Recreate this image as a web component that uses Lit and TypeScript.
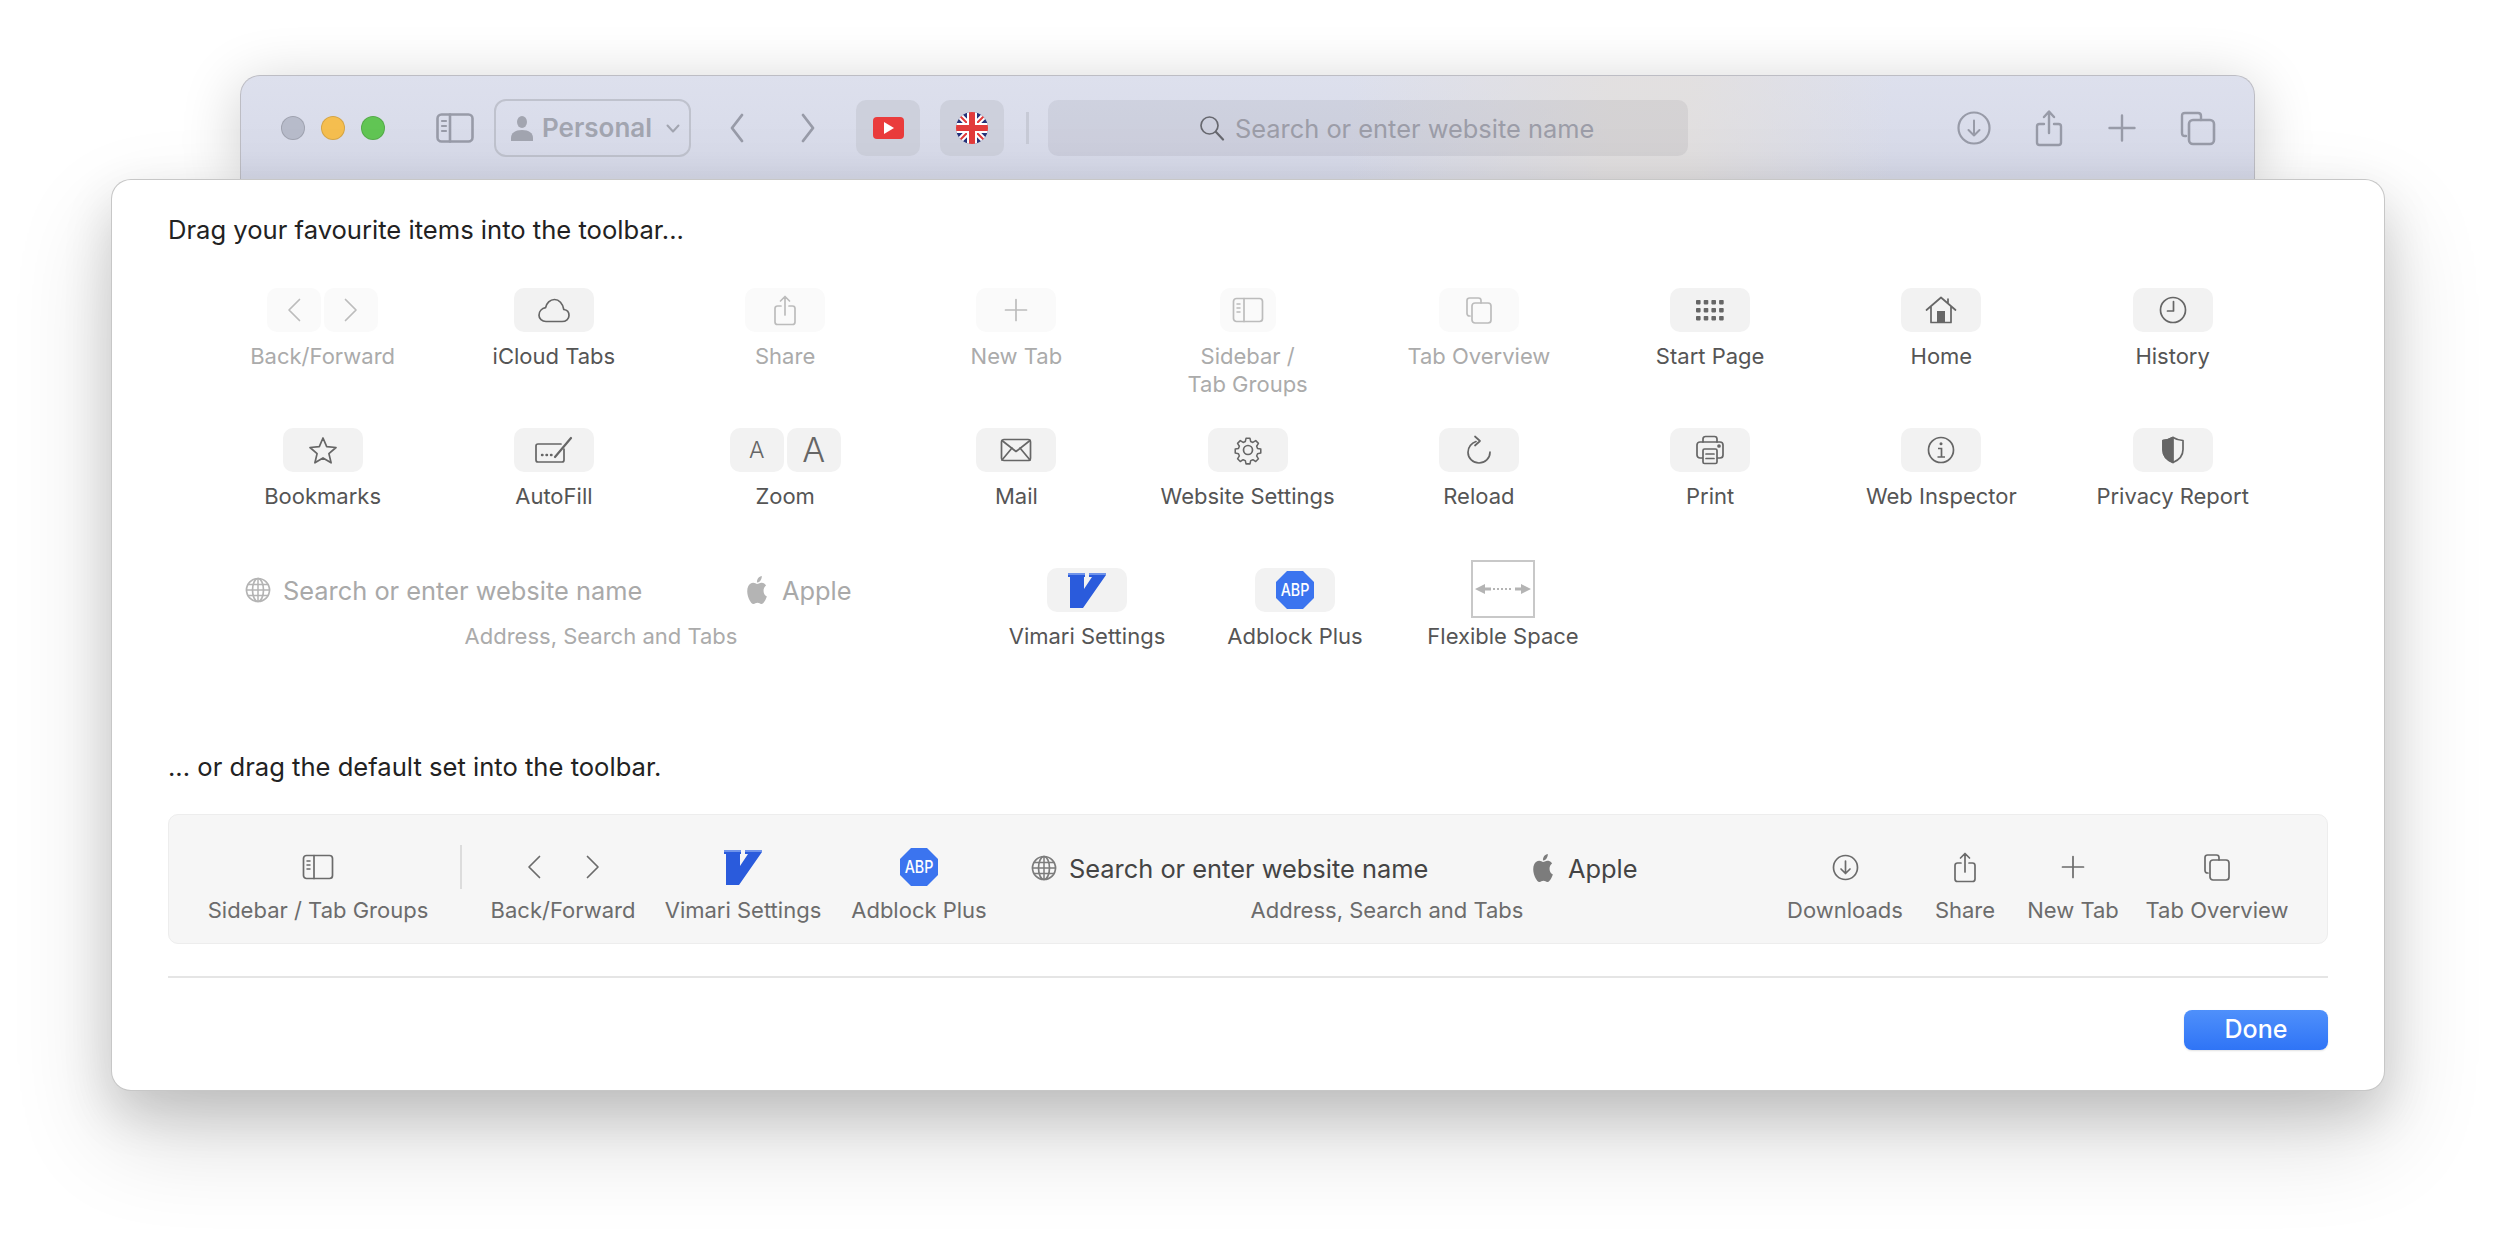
import { LitElement, html, svg, css, TemplateResult, SVGTemplateResult } from "lit";
import { customElement } from "lit/decorators.js";

// ------ icon helpers ------ //
const ico = (w: number, h: number, body: SVGTemplateResult) => html`
  <svg class="ico" width=${w} height=${h} viewBox="0 0 ${w} ${h}" fill="none" stroke="currentColor" stroke-width="1.7"
    stroke-linecap="round" stroke-linejoin="round">${body}</svg>`;

const back = () => ico(14, 24, svg`<path d="M12.5 1.5 2 12l10.5 10.5" />`);
const forward = () => ico(14, 24, svg`<path d="M1.5 1.5 12 12 1.5 22.5" />`);
const cloud = () => ico(34, 25, svg`<path d="M9 23.5h16c4 0 7-2.6 7-6 0-3.400-2.300-5.700-5.200-6C25.800 5.500 22 1.500 17.500 1.500c-4.500 0-8 3.600-8.900 8.200C4.800 10.300 2 13.400 2 17.200c0 3.700 3 6.300 7 6.300Z" />`);
const share = () => ico(24, 31, svg`<path d="M12 20V2M7.5 6 12 1.5 16.5 6M8 11H4.500C3 11 2 12 2 13.5v13.500C2 28.500 3 29.500 4.500 29.500h15c1.500 0 2.500-1 2.500-2.500V13.500C22 12 21 11 19.500 11H16" />`);
const plus = () => ico(24, 24, svg`<path d="M12 1.5v21M1.5 12h21" />`);
const sidebar = () => ico(32, 26, svg`
  <rect x="1.5" y="1.5" width="29" height="23" rx="3" /><path d="M12 1.5v23" />
  <path d="M5 7h3M5 11h3M5 15h3" stroke-width="1.5" />`);
const tabs = () => ico(28, 28, svg`
  <path d="M5 20H4.500C3 20 2 19 2 17.500V4.500C2 3 3 2 4.500 2h9C15 2 16 3 16 4.500V7" />
  <rect x="7" y="7" width="19" height="20" rx="3" />`);
const startPage = () => html`
  <svg class="ico" width="28" height="21" viewBox="0 0 28 21" fill="currentColor">
    ${[0, 1, 2].map((r) =>
      [0, 1, 2, 3].map((c) => svg`<rect x=${c * 7.7} y=${r * 8} width="4.6" height="4.4" rx="0.8" />`))}
  </svg>`;
const home = () => ico(32, 28, svg`
  <path d="M1.5 14 16 1.5 30.5 14M6 10v16.500h20V10M23 7V3" />
  <rect x="12" y="15" width="8" height="11.500" fill="currentColor" stroke="none" />`);
const clock = () => ico(28, 28, svg`<circle cx="14" cy="14" r="12.5" /><path d="M14.5 5.500V15H8.500" />`);
const star = () => ico(30, 29, svg`<path d="m15 2 3.700 8.700 9.300.8-7.100 6.100 2.200 9.200L15 21.900l-8.100 4.900 2.200-9.200L2 11.500l9.300-.8Z" />`);
const autofill = () => ico(40, 28, svg`
  <path d="M27 8H4C2.800 8 2 8.800 2 10v14c0 1.200.8 2 2 2h24c1.200 0 2-.8 2-2V13" />
  <path d="M21 21 37 2" stroke-width="2.2" />
  <path d="M8 19h.5M12.500 19h.5M17 19h.5" stroke-width="2.4" />`);
const mail = () => ico(32, 24, svg`
  <rect x="1.5" y="1.5" width="29" height="21" rx="2.5" />
  <path d="m2 2.500 14 11 14-11M2 22l10-12M30 22 20 10" />`);
const gear = () => ico(30, 30, svg`
  <path d="M12.800 2h4.400l.8 3.600 2.400 1 3.200-2 3 3-2 3.200 1 2.400 3.600.8v4.400l-3.600.8-1 2.400 2 3.200-3 3-3.200-2-2.400 1-.8 3.600h-4.400l-.8-3.600-2.400-1-3.200 2-3-3 2-3.200-1-2.400-3.600-.8v-4.400l3.600-.8 1-2.400-2-3.200 3-3 3.200 2 2.400-1Z" transform="translate(1.5 1.5) scale(.9)" />
  <circle cx="15" cy="15" r="4.5" />`);
const reload = () => ico(26, 30, svg`
  <path d="M10 6.500C5.500 8 2 12.200 2 17.200 2 23.400 7 28 13 28s11-4.600 11-10.800" />
  <path d="M9 1.500 14 6 9 10.500" />`);
const print = () => ico(30, 30, svg`
  <path d="M8 7V4c0-1.500 1-2.500 2.500-2.500h9C21 1.500 22 2.500 22 4v3" />
  <rect x="2" y="7" width="26" height="16" rx="3" />
  <rect x="8" y="14" width="14" height="14.500" rx="1.5" fill="var(--tile, #f2f2f2)" />
  <path d="M11 19h8M11 23.500h8" />
  <circle cx="24" cy="11" r="1" fill="currentColor" />`);
const info = () => html`
  <svg class="ico" width="28" height="28" viewBox="0 0 28 28" fill="none" stroke="currentColor" stroke-width="1.7">
    <circle cx="14" cy="14" r="12.5" /><path d="M11 12.500h3.500V21M10.500 21h7.500" />
    <circle cx="14" cy="7.8" r="1.5" fill="currentColor" stroke="none" />
  </svg>`;
const shield = () => ico(24, 28, svg`
  <path d="M12 1.500c3 1.800 6.500 2.800 10 3v9c0 6-4 10.500-10 13-6-2.500-10-7-10-13v-9c3.500-.2 7-1.200 10-3Z" />
  <path d="M12 1.500v25c-6-2.500-10-7-10-13v-9c3.500-.2 7-1.200 10-3Z" fill="currentColor" />`);
const download = () => ico(27, 27, svg`<circle cx="13.500" cy="13.500" r="12" /><path d="M13.500 7v12.500M9 15l4.500 4.500L18 15" />`);
const search = () => ico(26, 26, svg`<circle cx="10.5" cy="10.5" r="8.5" /><path d="m17 17 7 7.500" stroke-width="2.2" />`);
const globe = () => ico(26, 26, svg`
  <circle cx="13" cy="13" r="11.5" /><ellipse cx="13" cy="13" rx="5.5" ry="11.5" />
  <path d="M13 1.500v23M3 7.500h20M1.500 13h23M3 18.500h20" stroke-width="1.5" />`);
const apple = () => html`
  <svg class="ico" width="24" height="28" viewBox="0 0 24 24" preserveAspectRatio="none" fill="currentColor">
    <path d="M12.152 6.896c-.948 0-2.415-1.078-3.96-1.04-2.04.027-3.91 1.183-4.961 3.014-2.117 3.675-.546 9.103 1.519 12.09 1.013 1.454 2.208 3.09 3.792 3.039 1.52-.065 2.09-.987 3.935-.987 1.831 0 2.35.987 3.96.948 1.637-.026 2.676-1.48 3.676-2.948 1.156-1.688 1.636-3.325 1.662-3.415-.039-.013-3.182-1.221-3.22-4.857-.026-3.04 2.48-4.494 2.597-4.559-1.429-2.09-3.623-2.324-4.39-2.376-2-.156-3.675 1.09-4.61 1.09zM15.53 3.83c.843-1.012 1.4-2.427 1.245-3.83-1.207.052-2.662.805-3.532 1.818-.78.896-1.454 2.338-1.273 3.714 1.338.104 2.715-.688 3.559-1.701" />
  </svg>`;
const vimari = () => html`
  <svg class="ico" width="38" height="35" viewBox="0 0 38 35">
    <path d="M0 0h17v4h-1v12L24 4h-3V0h17v2L15 35H2V4H0Z" fill="#2a5bdc" />
    <path d="M0 0h17v2H0ZM21 0h17v2H21Z" fill="#6f93ea" />
  </svg>`;
const abp = () => html`
  <svg class="ico" width="38" height="38" viewBox="0 0 38 38">
    <path d="M11 0h16l11 11v16L27 38H11L0 27V11Z" fill="#3b74ef" />
    <text x="19" y="25" text-anchor="middle" class="abp" transform="translate(19 0) scale(.84 1) translate(-19 0)">ABP</text>
  </svg>`;
const person = () => html`
  <svg class="ico" width="22" height="25" viewBox="0 0 22 25" fill="currentColor">
    <ellipse cx="11" cy="6" rx="5" ry="6" /><path d="M0 25v-3c0-5 4-8 11-8s11 3 11 8v3Z" />
  </svg>`;
const ukFlag = () => html`
  <svg class="ico" width="32" height="32" viewBox="0 0 32 32">
    <defs><clipPath id="round"><circle cx="16" cy="16" r="16" /></clipPath></defs>
    <g clip-path="url(#round)">
      <rect width="32" height="32" fill="#26337a" />
      <path d="M0 0 32 32M32 0 0 32" stroke="#fff" stroke-width="6" />
      <path d="M0 0 32 32M32 0 0 32" stroke="#e23b3b" stroke-width="2" />
      <path d="M16 0v32M0 16h32" stroke="#fff" stroke-width="10" />
      <path d="M16 0v32M0 16h32" stroke="#e23b3b" stroke-width="6" />
    </g>
  </svg>`;

type Item = { label: string; icon?: () => TemplateResult; w?: number; off?: boolean; pair?: TemplateResult[] };

const ROWS: Item[] = [
  { label: "Back/Forward", off: true, pair: [back(), forward()] },
  { label: "iCloud Tabs", icon: cloud },
  { label: "Share", icon: share, off: true },
  { label: "New Tab", icon: plus, off: true },
  { label: "Sidebar /\nTab Groups", icon: sidebar, off: true, w: 56 },
  { label: "Tab Overview", icon: tabs, off: true },
  { label: "Start Page", icon: startPage },
  { label: "Home", icon: home },
  { label: "History", icon: clock },
  { label: "Bookmarks", icon: star },
  { label: "AutoFill", icon: autofill },
  { label: "Zoom", pair: [html`<span class="az small">A</span>`, html`<span class="az big">A</span>`] },
  { label: "Mail", icon: mail },
  { label: "Website Settings", icon: gear },
  { label: "Reload", icon: reload },
  { label: "Print", icon: print },
  { label: "Web Inspector", icon: info },
  { label: "Privacy Report", icon: shield },
];

@customElement("app-root")
export class AppRoot extends LitElement {
  static styles = css`
    :host {
      display: block;
      height: 1238px;
      overflow: hidden;
      background: #fff;
      font-family: Inter, "Liberation Sans", sans-serif;
      color: #222;
    }
    * { box-sizing: border-box; }
    .ico { display: block; flex: none; }
    .page { padding-top: 75px; }

    /* ---- browser window behind the sheet ---- */
    .window {
      position: relative;
      margin-left: 240px;
      width: 2015px;
      height: 104px;
      display: flex;
      align-items: center;
      padding: 1px 0 0 40px;
      border: 1px solid #bdbdc4;
      border-bottom: none;
      border-radius: 20px 20px 0 0;
      background:
        linear-gradient(90deg, rgba(225,223,220,0) 55%, rgba(228,224,220,.75) 68%, rgba(228,224,220,.75) 72%, rgba(225,223,220,0) 82%),
        linear-gradient(180deg, #dde0ed 0%, #d6d9e8 100%);
      box-shadow: 0 10px 60px rgba(0,0,0,.2);
      color: #989ba8;
    }
    .lights { display: flex; gap: 16px; margin-right: 51px; }
    .light { width: 24px; height: 24px; border-radius: 50%; border: 1px solid rgba(0,0,0,.13); }
    .grey { background: #b7bbca; }
    .amber { background: #f5be4f; }
    .green { background: #61c554; }
    .profile {
      display: flex;
      align-items: center;
      width: 197px;
      height: 58px;
      margin: 0 39px 0 20px;
      padding-left: 15px;
      border: 2px solid #bfc2cd;
      border-radius: 12px;
      font-size: 26px;
      font-weight: 600;
      color: #a2a5b0;
    }
    .profile span { margin: 0 14px 2px 9px; }
    .nav { display: flex; gap: 57px; margin-right: 41px; }
    .fav {
      width: 64px;
      height: 56px;
      margin-right: 20px;
      display: flex;
      align-items: center;
      justify-content: center;
      border-radius: 10px;
      background: #cdd0dc;
    }
    .yt { width: 31px; height: 22px; border-radius: 4px; background: #ea3c3c; display: flex; align-items: center; justify-content: center; }
    .yt i { border-left: 10px solid #fff; border-top: 6px solid transparent; border-bottom: 6px solid transparent; margin-left: 2px; }
    .sep-top { width: 3px; height: 32px; background: #c7cad6; margin: 0 19px 0 2px; }
    .address {
      width: 640px;
      height: 56px;
      display: flex;
      align-items: center;
      padding-left: 151px;
      gap: 10px;
      border-radius: 10px;
      background: rgba(60,60,80,.08);
      font-size: 25.4px;
      color: #9c9da8;
    }
    .address .ico { color: #67686f; }
    .tools { display: flex; align-items: center; margin-left: 269px; color: #989ba8; }

    /* ---- customise sheet ---- */
    .sheet {
      position: relative;
      margin-left: 111px;
      width: 2274px;
      height: 912px;
      padding: 35px 56px 0;
      background: #fff;
      border: 1px solid rgba(0,0,0,.22);
      border-radius: 20px;
      box-shadow: 0 22px 50px rgba(0,0,0,.14), 0 44px 100px rgba(0,0,0,.16);
    }
    .title { font-size: 25.6px; line-height: 30px; color: #222; }
    .grid {
      margin: 43px 39px 0;
      display: grid;
      grid-template-columns: repeat(9, 231.25px);
      grid-auto-rows: 140px;
    }
    .item { display: flex; flex-direction: column; align-items: center; }
    .tiles { display: flex; gap: 3px; }
    .tile {
      --tile: #f2f2f2;
      width: 80px;
      height: 44px;
      display: flex;
      align-items: center;
      justify-content: center;
      border-radius: 10px;
      background: #f2f2f2;
      color: #666;
    }
    .tile.half { width: 54px; }
    .label {
      margin-top: 10px;
      font-size: 22px;
      line-height: 28px;
      text-align: center;
      white-space: pre-line;
      color: #555;
    }
    .off .tile { --tile: #fafafa; background: #fafafa; color: #bcbcbc; }
    .off .label { color: #ababab; }
    .az { font-weight: 300; line-height: 1; }
    .small { font-size: 23px; }
    .big { font-size: 34px; }
    .abp { font: 500 17px Inter, "Liberation Sans", sans-serif; fill: #fff; }

    .extra { display: flex; height: 140px; padding-left: 77px; }
    .extra .addr { margin-right: 26px; }
    .addr { width: 712px; display: flex; flex-direction: column; align-items: center; flex: none; }
    .addr-row { width: 100%; height: 44px; display: flex; align-items: center; font-size: 25.4px; color: #a9a9a9; }
    .addr-row .ico { color: #b4b4b4; }
    .addr-row .url { width: 462px; margin-left: 12px; }
    .addr-row .brand { margin-left: 13px; }
    .addr .label { color: #ababab; }
    .extra .item { width: 208px; flex: none; }
    .flex-box {
      width: 64px;
      height: 58px;
      margin: -8px 0 -6px;
      border: 2px solid #c8c8c8;
      display: flex;
      align-items: center;
      justify-content: center;
    }
    .heading { margin-top: 44px; }

    /* ---- default set ---- */
    .set {
      margin-top: 32px;
      height: 130px;
      display: flex;
      padding: 30px 0 0 39px;
      border: 1px solid #ededed;
      border-radius: 10px;
      background: #f6f6f6;
    }
    .set .item { flex: none; }
    .set .slot { height: 44px; display: flex; align-items: center; justify-content: center; gap: 45px; color: #6b6b6b; }
    .set .label { margin-top: 7px; color: #6c6c6c; white-space: nowrap; }
    .sep { width: 2px; height: 44px; background: #dcdcdc; margin: 0 15px 0 32px; flex: none; }
    .set .addr { margin: 0 42px 0 30px; }
    .set .addr-row { color: #444; padding-top: 2px; }
    .set .addr-row .ico { color: #7c7c7c; }
    .set .addr .label { color: #6c6c6c; }

    .rule { margin-top: 32px; height: 2px; background: #e5e5e5; }
    .foot { margin-top: 32px; display: flex; justify-content: flex-end; }
    .done {
      width: 144px;
      height: 40px;
      padding: 0 0 2px;
      border: none;
      border-radius: 8px;
      background: linear-gradient(180deg, #4f90fb 0%, #2f74f6 100%);
      box-shadow: 0 1px 2px rgba(0,0,0,.12);
      color: #fff;
      font: 500 25px Inter, "Liberation Sans", sans-serif;
    }
  `;

  private tile(it: Item) {
    if (it.pair) {
      return html`<div class="tiles">${it.pair.map((p) => html`<div class="tile half">${p}</div>`)}</div>`;
    }
    return html`<div class="tile" style=${it.w ? `width:${it.w}px` : ""}>${it.icon!()}</div>`;
  }

  private addressItem(label: string) {
    return html`
      <div class="addr">
        <div class="addr-row">
          ${globe()}<span class="url">Search or enter website name</span>
          ${apple()}<span class="brand">Apple</span>
        </div>
        <div class="label">${label}</div>
      </div>`;
  }

  private setItem(label: string, width: number, icon: TemplateResult | TemplateResult[]) {
    return html`
      <div class="item" style="width:${width}px">
        <div class="slot">${icon}</div>
        <div class="label">${label}</div>
      </div>`;
  }

  render() {
    return html`
      <div class="page">
        <div class="window">
          <div class="lights">
            <div class="light grey"></div>
            <div class="light amber"></div>
            <div class="light green"></div>
          </div>
          ${ico(38, 30, svg`
            <rect x="1.5" y="1.5" width="35" height="27" rx="4" stroke-width="2.6" />
            <path d="M14 1.500v27" stroke-width="2.6" /><path d="M6 8h4M6 13h4M6 18h4" stroke-width="2.2" />`)}
          <div class="profile">
            ${person()}<span>Personal</span>
            ${ico(14, 9, svg`<path d="m1.5 1.5 5.500 6 5.500-6" stroke-width="2" />`)}
          </div>
          <div class="nav">
            ${ico(14, 30, svg`<path d="M12 2 2 15l10 13" stroke-width="2.8" />`)}
            ${ico(14, 30, svg`<path d="m2 2 10 13L2 28" stroke-width="2.8" />`)}
          </div>
          <div class="fav"><div class="yt"><i></i></div></div>
          <div class="fav">${ukFlag()}</div>
          <div class="sep-top"></div>
          <div class="address">${search()}<span>Search or enter website name</span></div>
          <div class="tools">
            ${ico(34, 34, svg`<circle cx="17" cy="17" r="15.5" stroke-width="2.2" /><path d="M17 9.500v15M11.500 19l5.500 5.500 5.500-5.500" stroke-width="2" />`)}
            <div style="width:44px"></div>
            ${ico(28, 37, svg`<path d="M14 23V2M9 7l5-5.500L19 7M9 14H4.500C3 14 2 15 2 16.500V32.500C2 34 3 35 4.500 35h19c1.500 0 2.500-1 2.500-2.500V16.500C26 15 25 14 23.500 14H19" stroke-width="2.4" />`)}
            <div style="width:45px"></div>
            ${ico(28, 28, svg`<path d="M14 1.500v25M1.500 14h25" stroke-width="2.4" />`)}
            <div style="width:44px"></div>
            ${ico(36, 35, svg`<path d="M6 25H5c-2 0-3-1-3-3V5c0-2 1-3 3-3h13c2 0 3 1 3 3v4" stroke-width="2.4" /><rect x="9" y="9" width="25" height="24" rx="4" stroke-width="2.6" />`)}
          </div>
        </div>

        <div class="sheet">
          <div class="title">Drag your favourite items into the toolbar...</div>

          <div class="grid">
            ${ROWS.map((it) => html`
              <div class="item ${it.off ? "off" : ""}">
                ${this.tile(it)}
                <div class="label">${it.label}</div>
              </div>`)}
          </div>

          <div class="extra">
            ${this.addressItem("Address, Search and Tabs")}
            <div class="item"><div class="tile">${vimari()}</div><div class="label">Vimari Settings</div></div>
            <div class="item"><div class="tile">${abp()}</div><div class="label">Adblock Plus</div></div>
            <div class="item">
              <div class="flex-box">
                <svg class="ico" width="56" height="16" viewBox="0 0 56 16" fill="#b4b4b4">
                  <path d="M0 8 10 3v3.500h6v3h-6V13ZM56 8 46 3v3.500h-6v3h6V13Z" />
                  <path d="M18 7h2v2h-2ZM22 7h2v2h-2ZM26 7h2v2h-2ZM30 7h2v2h-2ZM34 7h2v2h-2Z" />
                </svg>
              </div>
              <div class="label">Flexible Space</div>
            </div>
          </div>

          <div class="title heading">... or drag the default set into the toolbar.</div>

          <div class="set">
            ${this.setItem("Sidebar / Tab Groups", 220, sidebar())}
            <div class="sep"></div>
            ${this.setItem("Back/Forward", 172, [back(), forward()])}
            ${this.setItem("Vimari Settings", 188, vimari())}
            ${this.setItem("Adblock Plus", 164, abp())}
            ${this.addressItem("Address, Search and Tabs")}
            ${this.setItem("Downloads", 120, download())}
            ${this.setItem("Share", 120, share())}
            ${this.setItem("New Tab", 96, plus())}
            ${this.setItem("Tab Overview", 192, tabs())}
          </div>

          <div class="rule"></div>
          <div class="foot"><button class="done">Done</button></div>
        </div>
      </div>
    `;
  }
}
